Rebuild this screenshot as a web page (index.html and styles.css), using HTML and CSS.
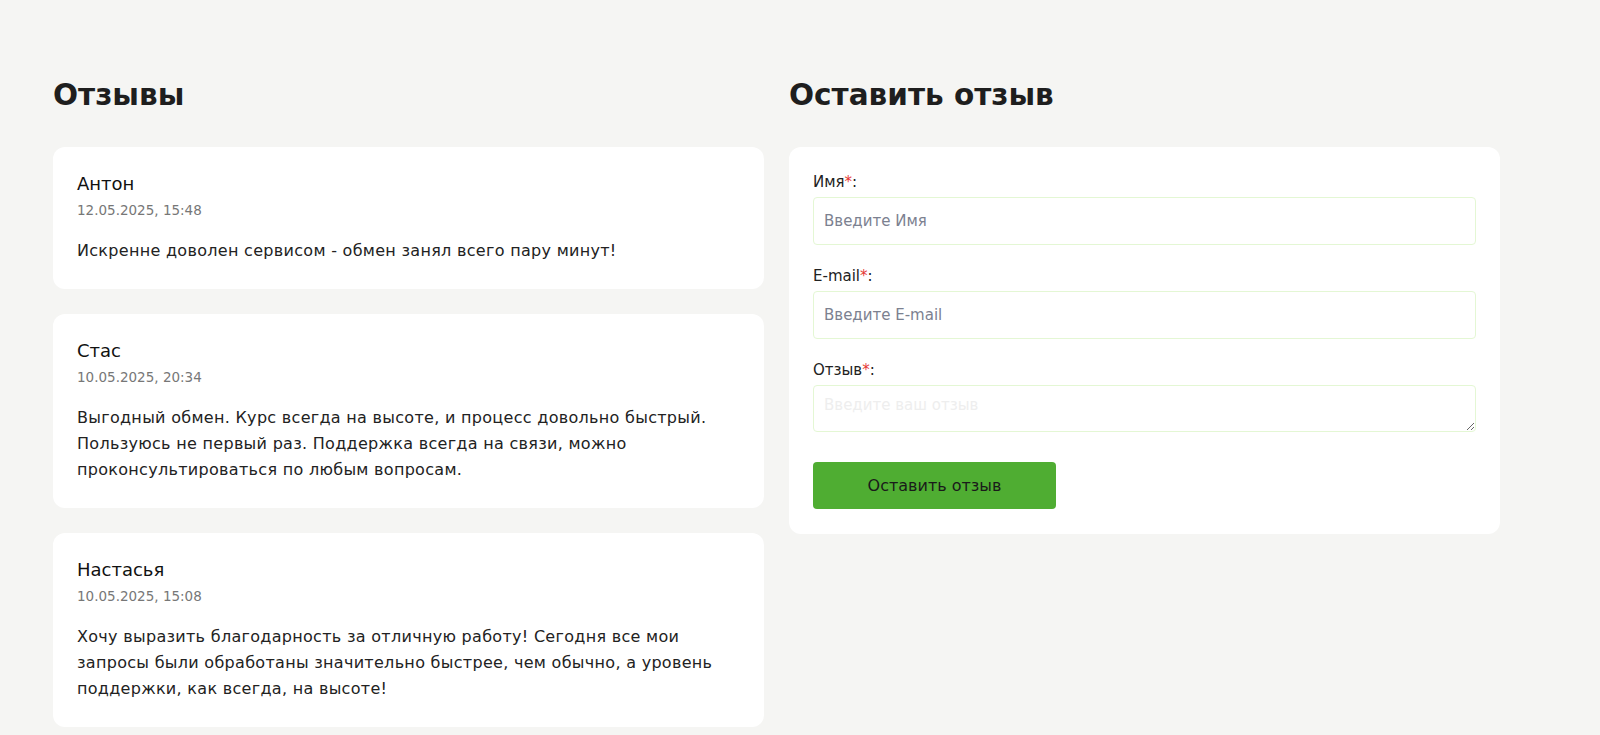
FILE: index.html
```html
<!DOCTYPE html>
<html lang="ru">
<head>
    <meta charset="UTF-8">
    <meta name="viewport" content="width=device-width, initial-scale=1.0">
    <title>Отзывы</title>
    <link rel="stylesheet" href="styles.css">
</head>
<body>
    <div class="wrapper">
        <section class="column">
            <h2 class="title">Отзывы</h2>
            <div class="reviews">
                <div class="review">
                    <div class="review-name">Антон</div>
                    <div class="review-date">12.05.2025, 15:48</div>
                    <p class="review-text">Искренне доволен сервисом - обмен занял всего пару минут!</p>
                </div>
                <div class="review">
                    <div class="review-name">Стас</div>
                    <div class="review-date">10.05.2025, 20:34</div>
                    <p class="review-text">Выгодный обмен. Курс всегда на высоте, и процесс довольно быстрый. Пользуюсь не первый раз. Поддержка всегда на связи, можно проконсультироваться по любым вопросам.</p>
                </div>
                <div class="review">
                    <div class="review-name">Настасья</div>
                    <div class="review-date">10.05.2025, 15:08</div>
                    <p class="review-text">Хочу выразить благодарность за отличную работу! Сегодня все мои запросы были обработаны значительно быстрее, чем обычно, а уровень поддержки, как всегда, на высоте!</p>
                </div>
            </div>
        </section>
        <section class="column">
            <h2 class="title">Оставить отзыв</h2>
            <form class="form" onsubmit="return false">
                <label class="field">
                    <span class="label">Имя<span class="req">*</span>:</span>
                    <input class="input" type="text" placeholder="Введите Имя">
                </label>
                <label class="field">
                    <span class="label">E-mail<span class="req">*</span>:</span>
                    <input class="input" type="email" placeholder="Введите E-mail">
                </label>
                <label class="field">
                    <span class="label">Отзыв<span class="req">*</span>:</span>
                    <textarea class="input textarea" placeholder="Введите ваш отзыв"></textarea>
                </label>
                <button class="btn" type="submit">Оставить отзыв</button>
            </form>
        </section>
    </div>
</body>
</html>
```

FILE: styles.css
```css
* {
    margin: 0;
    padding: 0;
    box-sizing: border-box;
    font-family: "DejaVu Sans", sans-serif;
}
body {
    background: #f5f5f3;
    color: #1c1c1c;
}
.wrapper {
    display: flex;
    gap: 25px;
    padding: 74px 0 0 53px;
}
.column {
    width: 711px;
    flex: none;
}
.title {
    font-weight: 700;
    font-size: 29.5px;
    line-height: 42px;
    color: #1e1e1e;
    margin-bottom: 31px;
}
.reviews {
    display: flex;
    flex-direction: column;
    gap: 25px;
}
.review {
    background: #fff;
    border-radius: 12px;
    padding: 25px 24px 25px;
}
.review-name {
    font-size: 18px;
    line-height: 24px;
    color: #111;
    margin-bottom: 3px;
}
.review-date {
    font-size: 13.5px;
    line-height: 22px;
    color: #777;
    margin-bottom: 17px;
}
.review-text {
    font-size: 16px;
    letter-spacing: 0.3px;
    line-height: 26px;
    color: #222;
}
.form {
    background: #fff;
    border-radius: 12px;
    padding: 24px 24px 25px;
    display: flex;
    flex-direction: column;
}
.field {
    display: flex;
    flex-direction: column;
    margin-bottom: 20px;
}
.label {
    font-size: 15px;
    line-height: 22px;
    color: #222;
    margin-bottom: 4px;
}
.req {
    color: #e53935;
}
.input {
    height: 48px;
    border: 1px solid #e4f7d4;
    border-radius: 4px;
    padding: 0 10px;
    font-size: 15px;
    color: #222;
    outline: none;
    background: #fff;
}
.input::placeholder {
    color: #7c8190;
}
.textarea {
    height: 47px;
    resize: vertical;
    padding: 8px 10px;
    line-height: 22px;
}
.textarea::placeholder {
    color: #eeeeee;
}
.btn {
    margin-top: 10px;
    width: 243px;
    height: 47px;
    background: #4fad32;
    border: none;
    border-radius: 4px;
    font-size: 16px;
    color: #1a1a1a;
    cursor: pointer;
}
```
